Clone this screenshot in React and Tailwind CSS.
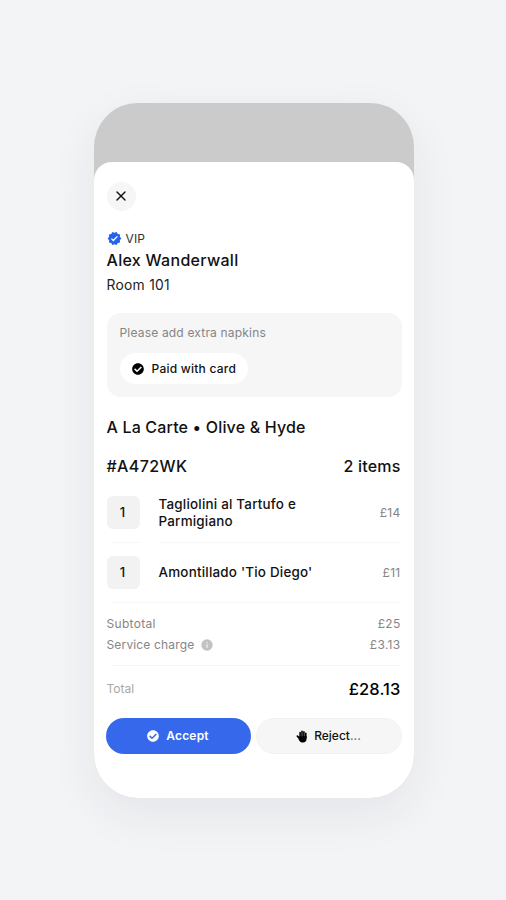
import { MdVerified } from "react-icons/md";
import { FaCheckCircle } from "react-icons/fa";
import { X } from "lucide-react";

const items = [
  { qty: 1, name: "Tagliolini al Tartufo e Parmigiano", price: "£14" },
  { qty: 1, name: "Amontillado 'Tio Diego'", price: "£11" },
];

function Hand() {
  return (
    <svg width="12" height="13" viewBox="0 0 12 13" fill="none" stroke="black" strokeLinecap="round">
      <path d="M4.1 7V2.6M6 7V1.3M7.9 7V1.8M9.8 7.4V3.4" strokeWidth="1.6" />
      <path d="M1.4 6.2L4 9" strokeWidth="1.8" />
      <path d="M3.3 6.2H10.6V8.6C10.6 11 9.2 12.6 7 12.6C5 12.6 3.9 11.8 2.6 9.4Z" fill="black" stroke="none" />
    </svg>
  );
}

function Item({ qty, name, price, split }) {
  return (
    <div className="flex h-[60px] flex-col">
      <div className="flex h-[59px] items-center">
        <div className="flex size-[33px] shrink-0 items-center justify-center rounded-[6px] bg-[#f2f2f2] pr-px text-[13px] font-medium">
          {qty}
        </div>
        <div className="ml-[19px] w-[165px] text-[13.4px] leading-[17px] font-medium tracking-[0.22px]">{name}</div>
        <div className="ml-auto text-[12px] tracking-[0.3px] text-[#858585]">{price}</div>
      </div>
      <div className="flex h-px">
        <div className={split ? "mr-[19px] ml-1 w-[29px] bg-[#f7f7f7]" : "ml-1 w-12 bg-[#f7f7f7]"} />
        <div className="flex-1 bg-[#f7f7f7]" />
      </div>
    </div>
  );
}

export default function App() {
  return (
    <div className="flex h-[900px] w-[506px] justify-center overflow-hidden bg-[#f3f4f6] pt-[103px] font-['Inter',sans-serif] text-[#111111]">
      <div className="ml-px h-[695px] w-[320px] overflow-hidden rounded-[44px] bg-[#cbcbcb] pt-[59px] shadow-[0_16px_48px_rgba(40,40,60,0.07)]">
        <div className="flex h-[636px] flex-col rounded-t-[18px] bg-white px-[13px] pt-5">
          <button className="flex size-[29px] items-center justify-center rounded-full bg-[#f6f6f6] pr-px pb-px">
            <X size={16} strokeWidth={2} />
          </button>
          <div className="mt-[17px] flex h-[21px] items-center gap-1 text-[12px] tracking-[0.1px] text-[#333]">
            <MdVerified size={15} className="text-[#2563eb]" />
            VIP
          </div>
          <div className="-mt-px flex h-6 items-center text-[16px] font-medium tracking-[0.3px]">Alex Wanderwall</div>
          <div className="flex h-[26px] items-center text-[13.8px] tracking-[0.3px] text-[#222]">Room 101</div>

          <div className="mt-[15px] h-[84px] w-[295px] rounded-[14px] bg-[#f6f6f6] pt-[11px] pl-[13px]">
            <div className="h-[18px] text-[12px] leading-[18px] tracking-[0.18px] text-[#858585]">Please add extra napkins</div>
            <div className="mt-[11px] flex h-[31px] w-[128px] items-center gap-[8px] rounded-full bg-white pl-[12px] text-[12px] font-medium tracking-[0.24px]">
              <FaCheckCircle size={12} className="text-black" />
              Paid with card
            </div>
          </div>

          <div className="mt-[18px] flex h-6 items-center text-[16px] font-medium tracking-[0.17px]">A La Carte • Olive &amp; Hyde</div>
          <div className="mt-[15px] flex h-6 items-center justify-between text-[16px] font-medium">
            <span className="tracking-[0.4px]">#A472WK</span>
            <span className="tracking-[0.2px]">2 items</span>
          </div>
          <div className="mt-[5px]">
            {items.map((item, i) => (
              <Item key={item.name} {...item} split={i === 0} />
            ))}
          </div>
          <div className="mt-[10px] text-[12px] tracking-[0.3px] text-[#858585]">
            <div className="flex h-[21px] items-center justify-between">
              <span>Subtotal</span>
              <span>£25</span>
            </div>
            <div className="flex h-[21px] items-center justify-between">
              <span className="flex items-center gap-[7px] tracking-[0.16px]">
                Service charge
                <svg width="12" height="12" viewBox="0 0 12 12">
                  <circle cx="6" cy="6" r="5.7" fill="#c2c2c2" />
                  <path d="M6 5.2v3.6M6 3v1" stroke="#f5f5f5" strokeWidth="1.2" />
                </svg>
              </span>
              <span>£3.13</span>
            </div>
          </div>
          <div className="mt-[10px] ml-1 h-px bg-[#f5f5f5]" />
          <div className="mt-[11px] flex h-6 items-center justify-between">
            <span className="text-[12px] text-[#a8a8a8]">Total</span>
            <span className="text-[16.5px] font-medium tracking-[0.1px] text-black">£28.13</span>
          </div>
          <div className="-mx-px mt-[17px] flex h-9 justify-between">
            <button className="flex w-[145px] items-center justify-center gap-[7px] rounded-full bg-[#3568ea] text-[12px] font-semibold tracking-[0.2px] text-white">
              <FaCheckCircle size={12} />
              Accept
            </button>
            <button className="flex w-[146px] items-center justify-center gap-[6px] rounded-full border border-[#f1f1f1] bg-[#f6f6f6] text-[12px] font-medium">
              <Hand />
              <span>
                Reject<span className="text-[#777]">...</span>
              </span>
            </button>
          </div>
        </div>
      </div>
    </div>
  );
}
